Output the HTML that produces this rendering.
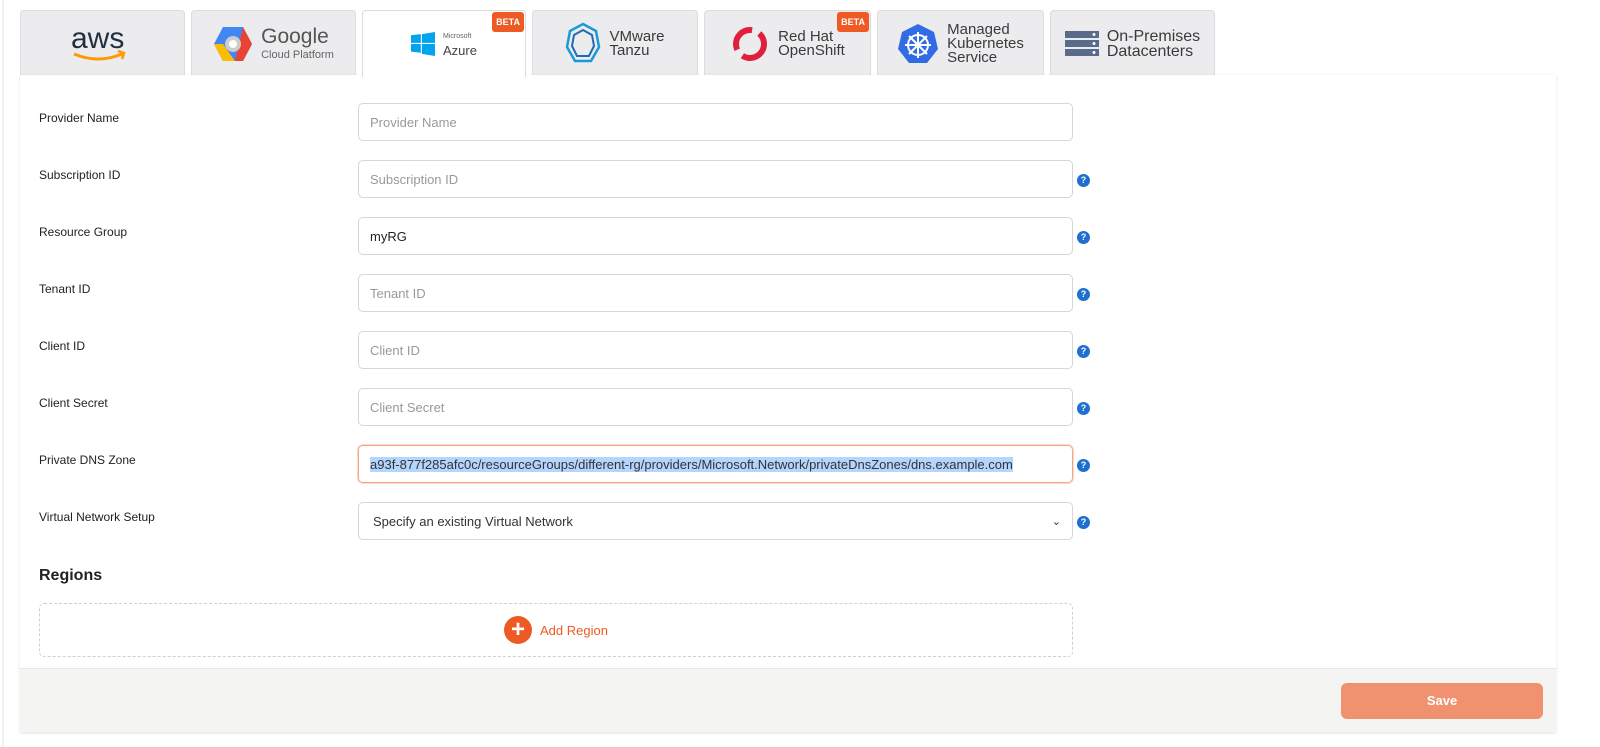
<!DOCTYPE html>
<html><head><style>
*{box-sizing:border-box;margin:0;padding:0}
body{width:1600px;height:747px;background:#fff;font-family:"Liberation Sans",sans-serif;position:relative;overflow:hidden;color:#222}
.edge{position:absolute;left:2px;top:0;width:2px;height:747px;background:#f0f0f0}
.tab{position:absolute;top:10px;height:66px;background:#ececee;border:1px solid #dcdcdf;border-bottom:none;border-radius:4px 4px 0 0;display:flex;align-items:center;justify-content:center;gap:8px;font-size:15px;color:#3a3a3a;line-height:14px}
.tab.active{background:#fff;height:67px;z-index:2}
.beta{position:absolute;top:1px;right:1px;background:#ee5a24;color:#fff;font-size:9px;font-weight:bold;padding:3px 4px;border-radius:3px}
.panel{position:absolute;left:20px;top:75px;width:1536px;height:657px;background:#fff;box-shadow:0 1px 3px rgba(0,0,0,.12)}
.footer{position:absolute;left:20px;top:668px;width:1536px;height:64px;background:#f4f4f3;border-top:1px solid #e8e8e8}
.label{position:absolute;left:39px;font-size:12px;color:#222}
.input{position:absolute;left:358px;width:715px;height:38px;border:1px solid #d6d6d6;border-radius:5px;font-size:13px;color:#999;padding:0 11px;display:flex;align-items:center}
.help{position:absolute;left:1077px;width:13px;height:13px;border-radius:50%;background:#1f6fd1;color:#fff;font-size:9px;font-weight:bold;text-align:center;line-height:13px}
</style></head><body>
<div class="edge"></div>
<div class="tab" style="left:20px;width:165px"><svg width="70" height="40" viewBox="0 0 70 40"><text x="3" y="24" font-family="Liberation Sans" font-size="30" fill="#232f3e">aws</text><path d="M6 30 Q30 40 54 30" stroke="#f90" stroke-width="3" fill="none"/><path d="M50 27 L56 29 L54 35" stroke="#f90" stroke-width="2.5" fill="none"/></svg></div>
<div class="tab" style="left:191px;width:165px"><svg width="40" height="40" viewBox="0 0 40 40"><polygon points="10,3 30,3 39,20 30,37 10,37 1,20" fill="#4285f4"/><polygon points="30,3 39,20 30,37 22,37" fill="#ea4335"/><polygon points="1,20 10,37 22,37 10,20" fill="#fbbc04"/><circle cx="20" cy="20" r="8" fill="#ccc"/><circle cx="20" cy="20" r="4" fill="#fff"/></svg><div><div style="font-size:21px;color:#555;line-height:22px">Google</div><div style="font-size:11px;color:#666">Cloud Platform</div></div></div>
<div class="tab active" style="left:362px;width:164px"><svg width="24" height="24" viewBox="0 0 22 22"><path d="M0 3 L9 2 V10 H0Z M10 2 L22 0 V10 H10Z M0 11 H9 V19 L0 18Z M10 11 H22 V22 L10 20Z" fill="#00a4ef"/></svg><div><div style="font-size:7px;color:#666">Microsoft</div><div style="font-size:13px;color:#444">Azure</div></div><span class="beta">BETA</span></div>
<div class="tab" style="left:532px;width:166px"><svg width="36" height="46" viewBox="0 0 36 46"><polygon points="18,3 31,10 34,26 26,40 10,40 2,26 5,10" fill="none" stroke="#1a9ad6" stroke-width="2.5"/><polygon points="18,9 27,14 29,25 24,35 12,35 7,25 9,14" fill="none" stroke="#1d6bb5" stroke-width="2"/></svg><div>VMware<br>Tanzu</div></div>
<div class="tab" style="left:704px;width:167px"><svg width="40" height="42" viewBox="0 0 40 42"><circle cx="20" cy="21" r="14" fill="none" stroke="#e01f3d" stroke-width="6" stroke-dasharray="30 8"/></svg><div>Red Hat<br>OpenShift</div><span class="beta">BETA</span></div>
<div class="tab" style="left:877px;width:167px"><svg width="42" height="44" viewBox="0 0 42 44"><polygon points="21,2 37,10 41,27 30,41 12,41 1,27 5,10" fill="#326ce5"/><circle cx="21" cy="23" r="10" fill="none" stroke="#fff" stroke-width="2"/><path d="M21 10V36M8 23H34M12 14L30 32M30 14L12 32" stroke="#fff" stroke-width="2"/></svg><div>Managed<br>Kubernetes<br>Service</div></div>
<div class="tab" style="left:1050px;width:165px"><svg width="34" height="30" viewBox="0 0 34 30"><rect x="0" y="2" width="34" height="7" fill="#5a6a8a"/><rect x="0" y="11" width="34" height="7" fill="#5a6a8a"/><rect x="0" y="20" width="34" height="7" fill="#5a6a8a"/><circle cx="29" cy="5.5" r="1.5" fill="#fff"/><circle cx="29" cy="14.5" r="1.5" fill="#fff"/><circle cx="29" cy="23.5" r="1.5" fill="#fff"/></svg><div style="font-size:16px;line-height:15px">On-Premises<br>Datacenters</div></div>
<div class="panel"></div>
<div class="footer"></div>

<div class="label" style="top:111px">Provider Name</div><div class="input" style="top:103px">Provider Name</div>
<div class="label" style="top:168px">Subscription ID</div><div class="input" style="top:160px">Subscription ID</div><div class="help" style="top:174px">?</div>
<div class="label" style="top:225px">Resource Group</div><div class="input" style="top:217px;color:#222">myRG</div><div class="help" style="top:231px">?</div>
<div class="label" style="top:282px">Tenant ID</div><div class="input" style="top:274px">Tenant ID</div><div class="help" style="top:288px">?</div>
<div class="label" style="top:339px">Client ID</div><div class="input" style="top:331px">Client ID</div><div class="help" style="top:345px">?</div>
<div class="label" style="top:396px">Client Secret</div><div class="input" style="top:388px">Client Secret</div><div class="help" style="top:402px">?</div>
<div class="label" style="top:453px">Private DNS Zone</div><div class="input" style="top:445px;border-color:#f3a58c;box-shadow:0 0 0 1px #fbd9cc;color:#333;white-space:nowrap"><span style="background:#b4d5fe">a93f-877f285afc0c/resourceGroups/different-rg/providers/Microsoft.Network/privateDnsZones/dns.example.com</span></div><div class="help" style="top:459px">?</div>
<div class="label" style="top:510px">Virtual Network Setup</div><div class="input" style="top:502px;color:#333;justify-content:space-between;padding-left:14px">Specify an existing Virtual Network<span style="font-size:11px">&#8964;</span></div><div class="help" style="top:516px">?</div>

<div style="position:absolute;left:39px;top:567px;font-size:16px;font-weight:bold;color:#222">Regions</div>
<div style="position:absolute;left:39px;top:603px;width:1034px;height:54px;border:1px dashed #d0d0d0;border-radius:5px;display:flex;align-items:center;justify-content:center;gap:8px;color:#ee5a24;font-size:13px"><span style="width:28px;height:28px;border-radius:50%;background:#ee5a24;color:#fff;font-size:24px;font-weight:bold;line-height:28px;text-align:center">+</span>Add Region</div>

<div style="position:absolute;left:1341px;top:683px;width:202px;height:36px;background:#f09170;border-radius:6px;color:#fff;font-size:13px;font-weight:bold;text-align:center;line-height:36px">Save</div>
</body></html>
